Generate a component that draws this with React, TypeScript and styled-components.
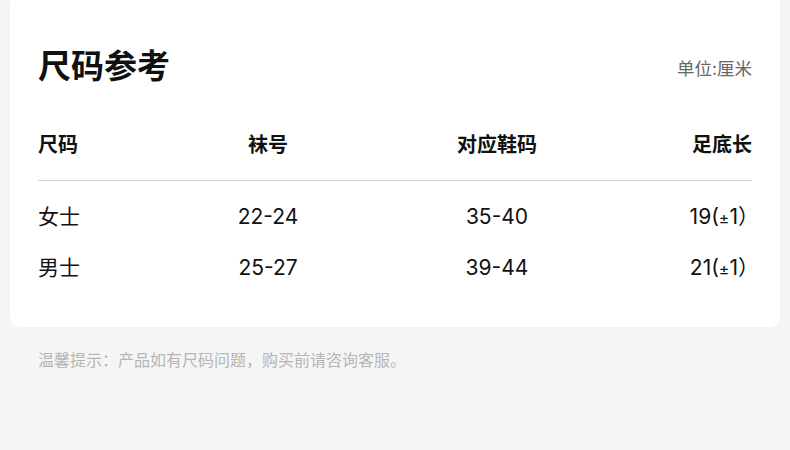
import React from "react";
import styled, { createGlobalStyle } from "styled-components";

const Global = createGlobalStyle`
  html, body { margin: 0; padding: 0; background: #f5f5f5; }
  body { font-family: Inter, "Noto Sans CJK SC", "Noto Sans", sans-serif; color: #111; }
`;

const Page = styled.div`
  width: 790px;
  height: 450px;
  overflow: hidden;
  background: #f5f5f5;
`;

const Card = styled.div`
  margin: -6px 10px 0;
  background: #fff;
  border-radius: 10px;
  padding: 50px 28px 44px;
`;

const Header = styled.div`
  display: flex;
  justify-content: space-between;
  align-items: baseline;
`;

const Title = styled.h1`
  margin: 0;
  font-size: 33px;
  line-height: 44px;
  font-weight: 700;
  color: #111;
`;

const Unit = styled.span`
  font-size: 17.5px;
  color: #666;
  line-height: 24px;
  position: relative;
  top: -3px;
`;

const Row = styled.div<{ $head?: boolean }>`
  display: grid;
  grid-template-columns: 150px 160px 298px 1fr;
  align-items: center;
  height: ${(p) => (p.$head ? "28px" : "30px")};
  font-size: ${(p) => (p.$head ? "20px" : "21px")};
  font-weight: ${(p) => (p.$head ? 700 : 400)};
  color: #111;
  margin-top: ${(p) => (p.$head ? "42px" : "21px")};
  padding-bottom: ${(p) => (p.$head ? "22px" : "0")};
  border-bottom: ${(p) => (p.$head ? "1px solid #d3d3d3" : "none")};
`;

const Cell = styled.div<{ $align: "left" | "center" | "right" }>`
  text-align: ${(p) => p.$align};
  white-space: nowrap;
  line-height: 30px;
`;

const Pm = styled.span`
  font-size: 16px;
  line-height: 1;
`;

const Close = styled.span`
  font-family: "Noto Sans CJK SC", sans-serif;
  line-height: 1;
  margin-right: -7px;
`;

const Tip = styled.p`
  margin: 22px 0 0 38px;
  font-size: 16px;
  line-height: 22px;
  color: #b5b5b5;
`;

const rows = [
  { name: "女士", sock: "22-24", shoe: "35-40", foot: "19" },
  { name: "男士", sock: "25-27", shoe: "39-44", foot: "21" },
];

export default function App() {
  return (
    <Page>
      <Global />
      <Card>
        <Header>
          <Title>尺码参考</Title>
          <Unit>单位:厘米</Unit>
        </Header>
        <Row $head>
          <Cell $align="left">尺码</Cell>
          <Cell $align="center">袜号</Cell>
          <Cell $align="center">对应鞋码</Cell>
          <Cell $align="right">足底长</Cell>
        </Row>
        {rows.map((r) => (
          <Row key={r.name}>
            <Cell $align="left">{r.name}</Cell>
            <Cell $align="center">{r.sock}</Cell>
            <Cell $align="center">{r.shoe}</Cell>
            <Cell $align="right">
              {r.foot}(<Pm>±</Pm>1<Close>）</Close>
            </Cell>
          </Row>
        ))}
      </Card>
      <Tip>温馨提示：产品如有尺码问题，购买前请咨询客服。</Tip>
    </Page>
  );
}
